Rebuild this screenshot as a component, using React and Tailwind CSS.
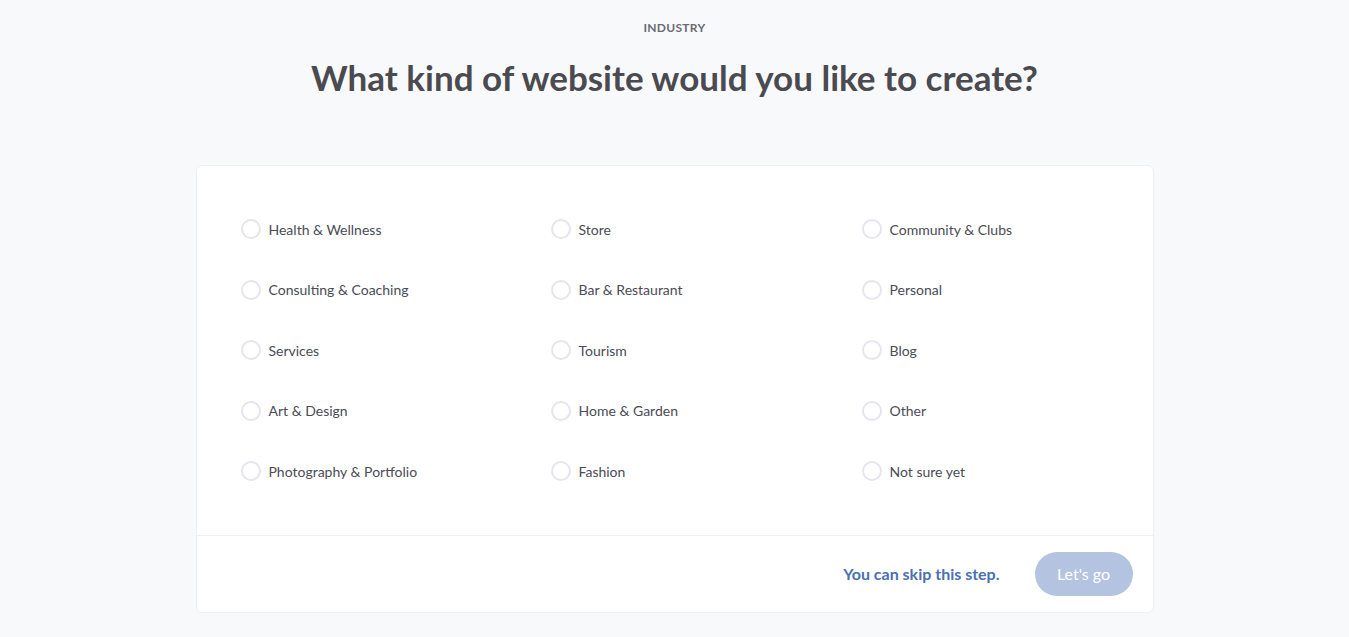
const options = [
  'Health & Wellness', 'Store', 'Community & Clubs',
  'Consulting & Coaching', 'Bar & Restaurant', 'Personal',
  'Services', 'Tourism', 'Blog',
  'Art & Design', 'Home & Garden', 'Other',
  'Photography & Portfolio', 'Fashion', 'Not sure yet',
]

function Option({ label }) {
  return (
    <label className="flex items-center h-[60.5px] cursor-pointer">
      <span className="w-5 h-5 rounded-full border-2 border-[#e4e5ef] bg-white shrink-0" />
      <span className="ml-[8px] text-[14px] text-[#4b4b55]">{label}</span>
    </label>
  )
}

export default function App() {
  return (
    <div className="min-h-screen bg-[#f8f9fb] font-['Lato',sans-serif] flex flex-col items-center">
      <p className="mt-[19px] text-[12px] font-bold tracking-wide text-[#6b6b72] uppercase">Industry</p>
      <h1 className="mt-[16px] text-[35px] font-bold text-[#4a4a50] leading-[48px]">What kind of website would you like to create?</h1>
      <div className="mt-[64px] w-[958px] bg-white border border-[#eeeff3] rounded-md">
        <div className="grid grid-cols-[310px_311px_1fr] pl-[44px] pt-[33px] pb-[33px]">
          {options.map(o => <Option key={o} label={o} />)}
        </div>
        <div className="border-t border-[#eeeff3] h-[77px] flex items-center justify-end pr-[20px]">
          <button className="text-[16px] font-bold text-[#4a6fb5] mr-[35px]">You can skip this step.</button>
          <button className="w-[98px] h-[44px] rounded-full bg-[#b3c3e0] text-white text-[16px]">Let's go</button>
        </div>
      </div>
    </div>
  )
}
